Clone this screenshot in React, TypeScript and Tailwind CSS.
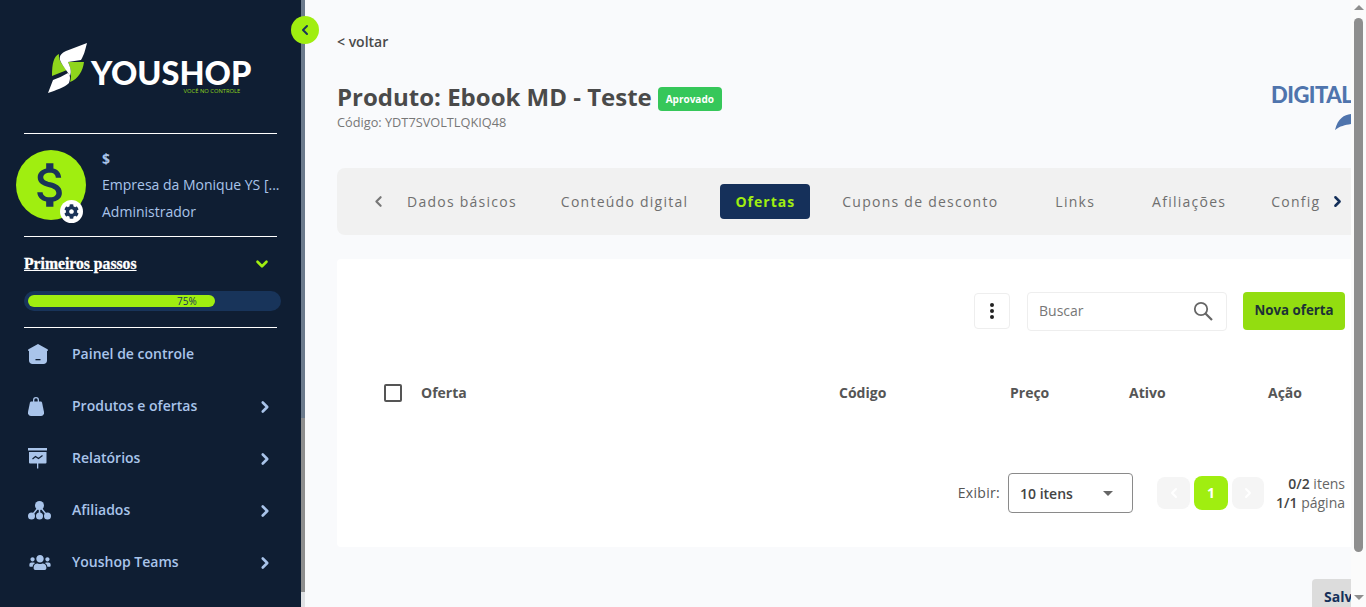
import { ChevronDown, ChevronLeft, ChevronRight } from "lucide-react";
import { FaCog, FaUsers } from "react-icons/fa";
import { MdAttachMoney } from "react-icons/md";

function HomeIcon() {
  return (
    <svg viewBox="0 0 20 21" className="h-[21px] w-5" fill="#a9c4ea">
      <path d="M10 0 19.500 5.200c.4.2.5.6.5 1 0 .5-.4.8-.9.8H19v9.500c0 2-1.500 3.500-3.500 3.500h-11C2.500 20 1 18.500 1 16.500V7H.9C.4 7 0 6.700 0 6.200c0-.4.100-.8.500-1L10 0Z" />
      <rect x="7.500" y="15" width="5" height="1.300" fill="#0f1e33" />
    </svg>
  );
}

function BagIcon() {
  return (
    <svg viewBox="0 0 16 20" className="h-5 w-4" fill="#a9c4ea">
      <path d="M5 6V4a3 3 0 0 1 6 0v2h-1.300V4a1.700 1.700 0 0 0-3.400 0v2H5Z" />
      <path d="M3.500 5.500h9c.8 0 1.400.5 1.600 1.300L16 16c.3 2-1 4-3 4H3c-2 0-3.300-2-3-4l1.900-9.200c.2-.8.8-1.300 1.600-1.300Z" />
    </svg>
  );
}

function ReportIcon() {
  return (
    <svg viewBox="0 0 20 21" className="h-[21px] w-5" fill="#a9c4ea">
      <rect x="0" y="0" width="19" height="2.500" />
      <path d="M1 4h17.500v10.500a1 1 0 0 1-1 1H10.300V20.500H9V15.500H2a1 1 0 0 1-1-1V4Z" />
      <path d="M4.500 11 7.500 8.500 10.500 10.500 14.500 7.500" fill="none" stroke="#0f1e33" strokeWidth="1.200" />
    </svg>
  );
}

function AffiliateIcon() {
  return (
    <svg viewBox="0 0 23 19" className="h-[19px] w-[23px]" fill="#a9c4ea">
      <circle cx="11.500" cy="4.500" r="4.500" />
      <circle cx="3.500" cy="15" r="3.500" />
      <circle cx="11.500" cy="15" r="3.500" />
      <circle cx="19.500" cy="15" r="3.500" />
      <path d="M11.500 5 3.500 15M11.500 5v10M11.500 5l8 10" stroke="#a9c4ea" strokeWidth="1.500" fill="none" />
    </svg>
  );
}

function LogoMark() {
  return (
    <svg viewBox="0 0 40 50" className="h-[50px] w-10 shrink-0">
      <path d="M11 11C6 13 4 20 4 33L19 27C15 23 10 17 11 11Z" fill="#8fd61c" />
      <path d="M20 19 36 19C35 28 30 36 22 39 24 32 23 25 20 19Z" fill="#8fd61c" />
      <path d="M39 0C37 8 36 12 33 17L20 19C22 24 24 28 22 33 19 28 14 22 12 17 11 12 14 10 18 8Z" fill="#ffffff" />
      <path d="M0 50 5 37C10 35 15 33 20 30 23 33 22 37 21 40 16 45 8 47 0 50Z" fill="#ffffff" />
    </svg>
  );
}

const menu = [
  { label: "Painel de controle", icon: <HomeIcon />, arrow: false },
  { label: "Produtos e ofertas", icon: <BagIcon />, arrow: true },
  { label: "Relatórios", icon: <ReportIcon />, arrow: true },
  { label: "Afiliados", icon: <AffiliateIcon />, arrow: true },
  { label: "Youshop Teams", icon: <FaUsers className="h-[17px] w-6 text-[#a9c4ea]" />, arrow: true },
];

const tabs = [
  { label: "Dados básicos", className: "ml-5" },
  { label: "Conteúdo digital", className: "ml-11" },
  { label: "Cupons de desconto", className: "ml-8" },
  { label: "Links", className: "ml-[57px]" },
  { label: "Afiliações", className: "ml-[57px]" },
  { label: "Config", className: "ml-[45px]" },
];

function TabLabel({ label, className }: { label: string; className: string }) {
  return <span className={`shrink-0 text-sm tracking-[1.25px] text-[#6f6f6f] ${className}`}>{label}</span>;
}

function Sidebar() {
  return (
    <aside className="relative flex h-full w-[305px] shrink-0">
      <div className="h-full w-[301px] overflow-hidden bg-[#0f1e33] pl-6">
        <div className="-ml-6 flex h-[133px] pl-12 pt-[43px]">
          <LogoMark />
          <div className="ml-[3px] flex flex-col items-end pt-4">
            <span className="text-[32.500px] font-black leading-[28px] text-white [font-family:Lato,sans-serif]">YOUSHOP</span>
            <span className="mr-[11px] mt-px text-[5.800px] leading-[7px] text-[#8fd61c]">VOCÊ NO CONTROLE</span>
          </div>
        </div>
        <div className="h-px w-[253px] bg-white" />
        <div className="-ml-2 flex h-[102px] items-center">
          <div className="relative flex h-[70px] w-[70px] shrink-0 items-center justify-center rounded-full bg-[#a0ee10]">
            <MdAttachMoney className="h-[58px] w-[58px] text-[#1a3358]" />
            <div className="absolute -bottom-[3px] right-[3px] flex h-[23px] w-[23px] items-center justify-center rounded-full bg-white">
              <FaCog className="h-[15px] w-[15px] text-[#1a3358]" />
            </div>
          </div>
          <div className="ml-4 w-[180px] text-sm leading-[26px] text-[#a9c4ea]">
            <div className="font-bold">$</div>
            <div className="truncate">Empresa da Monique YS [...</div>
            <div className="mt-px">Administrador</div>
          </div>
        </div>
        <div className="h-px w-[253px] bg-white" />
        <div className="flex h-[54px] w-[253px] items-center justify-between pr-1">
          <span className="text-[15.700px] font-bold text-white underline [-webkit-text-stroke:0.3px_white] [font-family:'Liberation_Serif',serif]">Primeiros passos</span>
          <ChevronDown className="mr-[2px] h-[18px] w-[18px] text-[#a0ee10]" strokeWidth={3.500} />
        </div>
        <div className="flex h-5 w-[257px] items-center rounded-full bg-[#18345a] px-1">
          <div className="h-3 w-[187px] rounded-full bg-[#a0ee10] pl-[149px] text-[10px] leading-3 text-[#18345a]">75%</div>
        </div>
        <div className="mt-4 h-px w-[253px] bg-white" />
        <nav>
          {menu.map((item) => (
            <div key={item.label} className="flex h-[52px] w-[253px] items-center">
              <div className="flex w-12 shrink-0 items-center pl-1">{item.icon}</div>
              <span className="flex-1 text-sm font-semibold text-[#a9c4ea]">{item.label}</span>
              {item.arrow && <ChevronRight className="mr-[3px] mt-0.5 h-[18px] w-[18px] text-[#a9c4ea]" strokeWidth={3.500} />}
            </div>
          ))}
          <div className="ml-1 mt-[19px] h-4 w-[17px] rounded-t bg-[#a9c4ea]" />
        </nav>
      </div>
      <div className="flex h-full w-1 flex-col bg-[#dfe1e4]">
        <div className="h-[418px] bg-[#6b7a8c]" />
        <div className="h-[174px] bg-[#8e8e8e]" />
      </div>
      <button className="absolute left-[291px] top-4 flex h-7 w-7 items-center justify-center rounded-full bg-[#a0ee10]">
        <ChevronLeft className="h-4 w-4 text-[#18345a]" strokeWidth={3} />
      </button>
    </aside>
  );
}

function Toolbar() {
  return (
    <div className="flex items-start justify-end pr-[6px]">
      <button className="mt-px flex h-9 w-9 flex-col items-center justify-center gap-[2px] rounded border border-[#eeeeee] bg-white">
        <span className="h-1 w-1 rounded-full bg-[#222222]" />
        <span className="h-1 w-1 rounded-full bg-[#222222]" />
        <span className="h-1 w-1 rounded-full bg-[#222222]" />
      </button>
      <div className="ml-[17px] flex h-[39px] w-[200px] items-center justify-between rounded border border-[#eeeeee] bg-white pl-[11px] pr-[13px]">
        <span className="-mt-0.5 text-sm text-[#777777]">Buscar</span>
        <svg viewBox="0 0 20 20" className="-mt-0.5 h-5 w-5" fill="none" stroke="#666666" strokeWidth="1.800">
          <circle cx="8" cy="8" r="6.200" />
          <path d="M12.500 12.500 19 19" strokeWidth="2.200" />
        </svg>
      </div>
      <button className="ml-4 h-[38px] w-[102px] rounded bg-[#93dd10] text-[13.300px] font-bold text-[#1c3136]">Nova oferta</button>
    </div>
  );
}

function TableHeader() {
  const th = "text-sm font-bold text-[#555555]";
  return (
    <div className="mt-[42px] flex h-[40px] items-center pl-[47px]">
      <div className="w-[37px]">
        <div className="h-[18px] w-[18px] rounded-[2px] border-2 border-[#555555]" />
      </div>
      <div className={`w-[418px] ${th}`}>Oferta</div>
      <div className={`w-[171px] ${th}`}>Código</div>
      <div className={`w-[119px] ${th}`}>Preço</div>
      <div className={`w-[139px] ${th}`}>Ativo</div>
      <div className={th}>Ação</div>
    </div>
  );
}

function Pagination() {
  return (
    <div className="mt-[60px] flex items-center justify-end pr-[6px]">
      <span className="text-sm tracking-[0.300px] text-[#555555]">Exibir:</span>
      <div className="ml-2 flex h-10 w-[125px] items-center justify-between rounded border border-[#8a8a8a] pl-[11px] pr-[19px]">
        <span className="mt-0.5 text-sm font-semibold text-[#444444]">10 itens</span>
        <span className="h-0 w-0 border-x-[5px] border-t-[5px] border-x-transparent border-t-[#666666]" />
      </div>
      <button className="ml-6 flex h-8 w-[33px] items-center justify-center rounded-lg bg-[#f5f5f5]">
        <ChevronLeft className="h-4 w-4 text-white" strokeWidth={3} />
      </button>
      <button className="ml-1 h-[34px] w-[34px] rounded-lg bg-[#a0ee10] text-sm font-bold text-white">1</button>
      <button className="ml-1 flex h-8 w-8 items-center justify-center rounded-lg bg-[#f5f5f5]">
        <ChevronRight className="h-4 w-4 text-white" strokeWidth={3} />
      </button>
      <div className="ml-3 w-[69px] text-right text-sm leading-[19px] text-[#666666]">
        <div><span className="font-semibold text-[#444444]">0/2</span> itens</div>
        <div className="whitespace-nowrap"><span className="font-semibold text-[#444444]">1/1</span> página</div>
      </div>
    </div>
  );
}

function Content() {
  return (
    <main className="h-full w-[1046px] shrink-0 overflow-hidden bg-[#f9fafc] pl-8">
      <div className="pt-[33px] text-sm font-semibold leading-[18px] text-[#4a4a4a]">&lt; voltar</div>
      <div className="mt-[27px] flex h-[63px] justify-between">
        <div>
          <div className="flex h-[38px] items-center">
            <h1 className="text-2xl font-bold text-[#4a4a4a]">Produto: Ebook MD - Teste</h1>
            <span className="ml-[6px] mt-1 flex h-6 w-16 items-center justify-center rounded bg-[#36c75a] text-[10px] font-bold text-white">Aprovado</span>
          </div>
          <div className="-mt-0.5 text-[12.750px] leading-[16px] text-[#777777]">Código: YDT7SVOLTLQKIQ48</div>
        </div>
        <div className="relative h-[52px] w-[80px] overflow-hidden">
          <span className="block pt-[4px] text-[22px] font-black leading-[26px] tracking-[-0.500px] text-[#4f74ad] [font-family:Lato,sans-serif]">DIGITAL</span>
          <svg viewBox="0 0 16 16" className="absolute bottom-0 right-0 h-4 w-4" fill="#4f74ad">
            <path d="M16 0C9 1 3 4 0 16 5 12 10 11 16 10Z" />
          </svg>
        </div>
      </div>
      <div className="mt-[27px] flex h-[67px] items-center overflow-hidden rounded-l-lg bg-[#f1f1f1] pl-[33px]">
        <ChevronLeft className="h-[17px] w-[17px] shrink-0 text-[#777777]" strokeWidth={3} />
        <TabLabel {...tabs[0]} />
        <TabLabel {...tabs[1]} />
        <button className="ml-8 flex h-[35px] w-[90px] shrink-0 items-center justify-center rounded bg-[#15305a] text-sm font-bold tracking-[1px] text-[#a0ee10]">Ofertas</button>
        <TabLabel {...tabs[2]} />
        <TabLabel {...tabs[3]} />
        <TabLabel {...tabs[4]} />
        <TabLabel {...tabs[5]} />
        <ChevronRight className="ml-[9px] h-[17px] w-[17px] shrink-0 text-[#15305a]" strokeWidth={3.500} />
      </div>
      <section className="mt-6 h-[288px] rounded-l bg-white pt-[33px]">
        <Toolbar />
        <TableHeader />
        <Pagination />
      </section>
      <div className="mt-8 flex justify-end">
        <div className="h-10 w-[39px] overflow-hidden rounded-tl bg-[#dcdcdc] pl-3 pt-2 text-sm font-bold text-[#15305a]">Salvar</div>
      </div>
    </main>
  );
}

function PageScrollbar() {
  return (
    <div className="relative h-full w-[15px] shrink-0 bg-[#fbfbfb] pl-[3px] pt-[18px]">
      <div className="absolute left-[3px] top-[5px] h-0 w-0 border-x-[5px] border-b-[5px] border-x-transparent border-b-[#8e8e8e]" />
      <div className="h-[534px] w-[9px] rounded-full bg-[#8e8e8e]" />
      <div className="absolute bottom-[7px] left-[3px] h-0 w-0 border-x-[5px] border-t-[5px] border-x-transparent border-t-[#8e8e8e]" />
    </div>
  );
}

export default function App() {
  return (
    <div className="flex h-[607px] w-[1366px] overflow-hidden [font-family:'Open_Sans',sans-serif]">
      <Sidebar />
      <Content />
      <PageScrollbar />
    </div>
  );
}
